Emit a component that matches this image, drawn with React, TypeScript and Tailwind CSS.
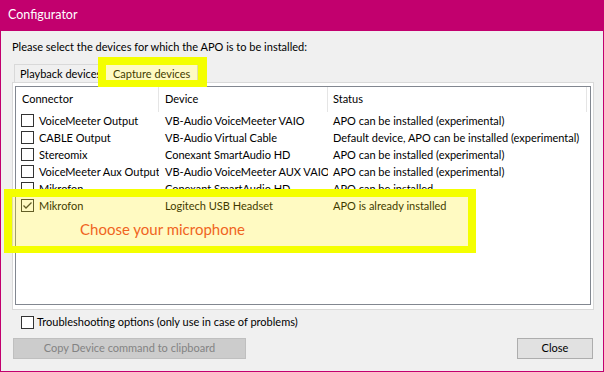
import React from "react";

const rows = [
  { c: "VoiceMeeter Output", d: "VB-Audio VoiceMeeter VAIO", s: "APO can be installed (experimental)", k: false },
  { c: "CABLE Output", d: "VB-Audio Virtual Cable", s: "Default device, APO can be installed (experimental)", k: false },
  { c: "Stereomix", d: "Conexant SmartAudio HD", s: "APO can be installed (experimental)", k: false },
  { c: "VoiceMeeter Aux Output", d: "VB-Audio VoiceMeeter AUX VAIO", s: "APO can be installed (experimental)", k: false },
  { c: "Mikrofon", d: "Conexant SmartAudio HD", s: "APO can be installed", k: false },
  { c: "Mikrofon", d: "Logitech USB Headset", s: "APO is already installed", k: true },
];

function Box({ checked }: { checked: boolean }) {
  return (
    <div className="w-[13px] h-[13px] shrink-0 border border-[#333333] bg-white flex items-center justify-center">
      {checked && (
        <svg width="11" height="11" viewBox="0 0 11 11">
          <path d="M1.5 5.5 L4 8 L9.5 2.5" fill="none" stroke="#333333" strokeWidth="1.3" />
        </svg>
      )}
    </div>
  );
}

export default function App() {
  return (
    <div className="relative w-[604px] h-[372px] flex flex-col bg-[#f0f0f0] border-l border-r border-b border-[#c2006e] font-['Lato',sans-serif] text-[11px] text-black overflow-hidden">
      <div className="h-[31px] shrink-0 bg-[#c2006e] text-white flex items-center pl-[8px] -mx-px text-[12.5px]">
        Configurator
      </div>
      <div className="pl-[11px] flex flex-col">
        <div className="mt-[8px] leading-[16px] h-[16px] whitespace-nowrap">
          Please select the devices for which the APO is to be installed:
        </div>
        <div className="mt-[7px] h-[20px] flex items-end pl-[2px]">
          <div className="h-[18px] w-[90px] border-t border-l border-[#d9d9d9] flex items-center pl-[5px] leading-[16px] whitespace-nowrap overflow-hidden">
            Playback devices
          </div>
          <div className="h-[20px] w-[94px] border-t border-l border-r border-[#d9d9d9] bg-white flex items-center pl-[8px] leading-[16px] whitespace-nowrap -mb-px relative z-10">
            Capture devices
          </div>
        </div>
        <div className="w-[582px] h-[228px] border border-[#d9d9d9] bg-white pt-[3px] pl-[2px] pr-[2px] pb-[4px]">
          <div className="w-full h-full border border-[#828790] bg-white flex flex-col">
            <div className="h-[25px] flex shrink-0">
              <div className="w-[143px] border-r border-[#e5e5e5] pl-[6px] flex items-center">Connector</div>
              <div className="w-[169px] border-r border-[#e5e5e5] pl-[6px] flex items-center">Device</div>
              <div className="w-[259px] border-r border-[#e5e5e5] pl-[5px] flex items-center">Status</div>
            </div>
            {rows.map((r, i) => (
              <div key={i} className="h-[17px] flex shrink-0 leading-[17px] whitespace-nowrap">
                <div className="w-[143px] pl-[5px] flex items-center overflow-hidden">
                  <Box checked={r.k} />
                  <span className="ml-[5px]">{r.c}</span>
                </div>
                <div className="w-[169px] pl-[6px] overflow-hidden">{r.d}</div>
                <div className="w-[259px] pl-[5px] overflow-hidden">{r.s}</div>
              </div>
            ))}
          </div>
        </div>
        <div className="mt-[4px] h-[17px] flex items-center pl-[9px]">
          <Box checked={false} />
          <span className="ml-[3px] whitespace-nowrap">Troubleshooting options (only use in case of problems)</span>
        </div>
        <div className="mt-[7px] flex items-center pr-[10px]">
          <div className="ml-[1px] w-[233px] h-[21px] bg-[#cccccc] border border-[#bfbfbf] text-[#838383] flex items-center justify-center">
            Copy Device command to clipboard
          </div>
          <div className="ml-auto w-[76px] h-[21px] bg-[#e1e1e1] border border-[#adadad] flex items-center justify-center">
            Close
          </div>
        </div>
      </div>

      <div className="absolute left-[97px] top-[57px] w-[109px] h-[30px] border-t-[8px] border-l-[8px] border-r-[9px] border-b-[7px] border-[#f4ff00] bg-[rgba(255,235,0,0.24)] z-20" />
      <div className="absolute left-[3px] top-[189px] w-[472px] h-[64px] border-t-[8px] border-l-[8px] border-r-[8px] border-b-[7px] border-[#f4ff00] bg-[rgba(255,235,0,0.24)] z-20">
        <div className="pl-[68px] pt-[23px] text-[15px] leading-[18px] text-[#f0641e] whitespace-nowrap">
          Choose your microphone
        </div>
      </div>
    </div>
  );
}
